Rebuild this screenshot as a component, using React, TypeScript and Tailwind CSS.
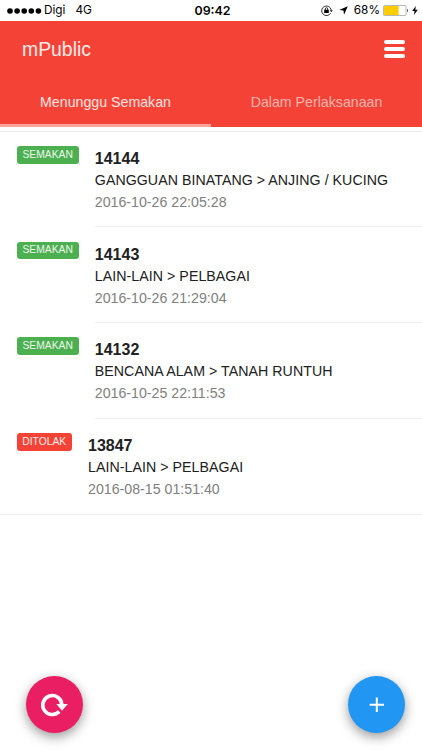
type Report = {
  id: string;
  category: string;
  date: string;
  status: "SEMAKAN" | "DITOLAK";
};

const REPORTS: Report[] = [
  { id: "14144", category: "GANGGUAN BINATANG > ANJING / KUCING", date: "2016-10-26 22:05:28", status: "SEMAKAN" },
  { id: "14143", category: "LAIN-LAIN > PELBAGAI", date: "2016-10-26 21:29:04", status: "SEMAKAN" },
  { id: "14132", category: "BENCANA ALAM > TANAH RUNTUH", date: "2016-10-25 22:11:53", status: "SEMAKAN" },
  { id: "13847", category: "LAIN-LAIN > PELBAGAI", date: "2016-08-15 01:51:40", status: "DITOLAK" },
];

export default function App() {
  return (
    <div className="relative flex h-[750px] w-[422px] flex-col overflow-hidden bg-white font-['Liberation_Sans',Arial,sans-serif]">
      <StatusBar />

      {/* Header + tabs */}
      <header className="flex h-[105.5px] shrink-0 flex-col bg-[#f44336] text-white">
        <div className="flex h-[56px] items-center justify-between pr-[17px] pl-[22px]">
          <h1 className="pt-px text-[19.4px] leading-none text-white/90">mPublic</h1>
          <button aria-label="Menu" className="flex w-[21px] flex-col gap-[3.2px]">
            <span className="h-[3.6px] rounded-full bg-white" />
            <span className="h-[3.6px] rounded-full bg-white" />
            <span className="h-[3.6px] rounded-full bg-white" />
          </button>
        </div>
        <nav className="grid flex-1 grid-cols-2 text-[14.2px]">
          <button className="border-b-[3px] border-[#f9a19a] pt-[5px] text-white/85">Menunggu Semakan</button>
          <button className="border-b-[3px] border-transparent pt-[5px] text-white/60">Dalam Perlaksanaan</button>
        </nav>
      </header>

      {/* Reports */}
      <ul className="mt-1 border-y border-[#f0f0f0]">
        {REPORTS.map((r, i) => (
          <ReportRow key={r.id} report={r} last={i === REPORTS.length - 1} />
        ))}
      </ul>

      {/* Floating actions */}
      <button
        aria-label="Refresh"
        className="absolute top-[676px] left-[26px] flex size-[57px] items-center justify-center rounded-full bg-[#e91e63] shadow-[0_4px_12px_rgba(0,0,0,0.4)]"
      >
        <svg width="28" height="26" viewBox="0 0 28 26" fill="none">
          <path d="M18.2 19.6A9.5 9.5 0 1 1 20.8 12.6" stroke="white" strokeWidth="3.6" />
          <path d="M15.4 12H26.8L21 18.8Z" fill="white" />
        </svg>
      </button>
      <button
        aria-label="Add"
        className="absolute top-[676px] left-[348px] flex size-[57px] items-center justify-center rounded-full bg-[#2196f3] shadow-[0_4px_12px_rgba(0,0,0,0.4)]"
      >
        <svg width="15" height="15" viewBox="0 0 15 15" stroke="white" strokeWidth="2">
          <path d="M7.8 .6V15M.6 7.8H15" />
        </svg>
      </button>
    </div>
  );
}

function StatusBar() {
  return (
    <div className="grid h-[21px] shrink-0 grid-cols-[1fr_auto_1fr] items-center pr-[4px] pl-[7px] font-[Inter,sans-serif] text-[11.8px] leading-none text-black">
      <div className="flex items-center pt-px">
        <svg width="35" height="6" viewBox="0 0 35 6" className="mr-[2px]">
          <circle cx="3" cy="3" r="2.8" />
          <circle cx="10.1" cy="3" r="2.8" />
          <circle cx="17.2" cy="3" r="2.8" />
          <circle cx="24.3" cy="3" r="2.8" />
          <circle cx="31.4" cy="3" r="2.8" />
        </svg>
        <span>Digi</span>
        <span className="ml-[10px]">4G</span>
      </div>
      <span className="pt-px text-[12.4px] font-semibold">09:42</span>
      <div className="flex items-center justify-end pt-px">
        {/* Rotation lock */}
        <svg width="12" height="11" viewBox="0 0 12 11" fill="none" stroke="black" strokeWidth=".8">
          <path d="M9.6 8.2A4.8 4.8 0 1 1 10.2 5" />
          <path d="M8.7 5.2H11.8L10.2 7.1Z" fill="black" stroke="none" />
          <rect x="3.2" y="4.8" width="4.6" height="3.3" rx=".3" fill="black" stroke="none" />
          <path d="M4.3 5V3.9a1.2 1.2 0 0 1 2.4 0V5" />
        </svg>
        {/* Location */}
        <svg width="9" height="9" viewBox="0 0 9 9" className="ml-[6px]">
          <path d="M8.8 .2L5 8.8L4.5 4.5L.2 4Z" />
        </svg>
        <span className="ml-[6px]">68%</span>
        <svg width="26" height="11" viewBox="0 0 26 11" className="ml-[3px]">
          <rect x=".5" y=".5" width="22.5" height="10" rx="1" fill="white" stroke="#999" strokeWidth=".7" />
          <rect x="1" y="1" width="14.6" height="9" rx=".6" fill="#ffcc00" />
          <path d="M24 3.8a1.9 1.9 0 0 1 0 3.4Z" fill="#555" />
        </svg>
        <svg width="6" height="9" viewBox="0 0 6 9" className="ml-[3px]">
          <path d="M3.8 0L.2 5H2.6L1.9 9L5.8 3.7H3.3Z" />
        </svg>
      </div>
    </div>
  );
}

function ReportRow({ report, last }: { report: Report; last: boolean }) {
  const rejected = report.status === "DITOLAK";
  return (
    <li className="flex h-[95.7px] items-start pl-[16.5px]">
      <span
        className={`mt-[14.5px] mr-[16px] flex h-[17.5px] shrink-0 items-center justify-center rounded-[3px] text-[10.3px] leading-none text-white/90 ${
          rejected ? "w-[55.5px] bg-[#f44336]" : "w-[62.3px] bg-[#4caf50]"
        }`}
      >
        {report.status}
      </span>
      <div className={`h-full flex-1 pt-[16.5px] whitespace-nowrap ${last ? "" : "border-b border-[#f0f0f0]"}`}>
        <p className="text-[16px] leading-[22px] font-bold text-[#212121]">{report.id}</p>
        <p className="text-[14.2px] leading-[21px] tracking-[0.05px] text-[#212121]">{report.category}</p>
        <p className="text-[14.2px] leading-[22px] text-[#808080]">{report.date}</p>
      </div>
    </li>
  );
}
